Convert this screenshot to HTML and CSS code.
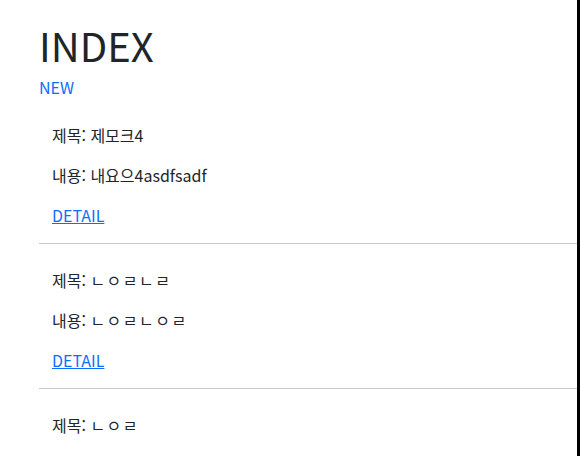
FILE: index.html
```html
<!DOCTYPE html>
<html lang="ko">
<head>
<meta charset="utf-8">
<title>INDEX</title>
<link rel="stylesheet" href="styles.css">
</head>
<body>
<div class="frame">
  <div class="container">
    <h1 class="title">INDEX</h1>
    <a class="new-link" href="#">NEW</a>
    <div class="item">
      <p>제목: 제모크4</p>
      <p>내용: 내요으4asdfsadf</p>
      <p><a href="#">DETAIL</a></p>
    </div>
    <hr>
    <div class="item">
      <p>제목: <span class="jamo">ㄴㅇㄹㄴㄹ</span></p>
      <p>내용: <span class="jamo">ㄴㅇㄹㄴㅇㄹ</span></p>
      <p><a href="#">DETAIL</a></p>
    </div>
    <hr>
    <div class="item">
      <p>제목: <span class="jamo">ㄴㅇㄹ</span></p>
    </div>
  </div>
</div>
</body>
</html>
```

FILE: styles.css
```css
html, body {
  margin: 0;
  padding: 0;
  background: #fff;
}
body {
  font-family: "Noto Sans CJK KR", "Noto Sans", sans-serif;
  font-size: 16px;
  line-height: 24px;
  color: #212529;
}
.frame {
  height: 456px;
  overflow: hidden;
  border-right: 3px solid #000;
  box-sizing: border-box;
}
.container {
  padding: 21px 0 0 39px;
}
.title {
  margin: 0 0 6px 0;
  font-size: 40px;
  line-height: 48px;
  font-weight: 400;
}
.new-link {
  display: block;
  color: #0d6efd;
  text-decoration: none;
  margin-bottom: 16px;
}
.item {
  padding: 8px 0 0 13px;
}
.item p {
  margin: 0 0 16px 0;
}
.item a {
  color: #0d6efd;
  text-decoration: underline;
}
.jamo {
  letter-spacing: 1.5px;
}
hr {
  margin: 0 0 16px 0;
  border: 0;
  border-top: 1px solid #c8c9ca;
  height: 0;
}
```
